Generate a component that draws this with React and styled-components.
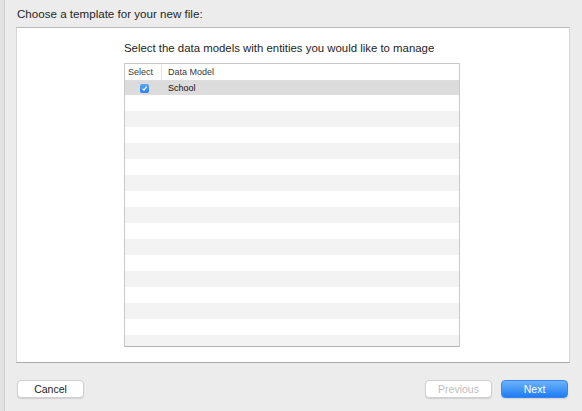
import React from 'react';
import styled, { createGlobalStyle } from 'styled-components';

const GlobalStyle = createGlobalStyle`
  html, body {
    margin: 0;
    padding: 0;
    background: #ececec;
    font-family: "Liberation Sans", Arial, sans-serif;
  }
`;

const Sheet = styled.div`
  width: 582px;
  height: 411px;
  display: flex;
  background: #ececec;
  overflow: hidden;
`;

const Edge = styled.div`
  width: 4px;
  flex: none;
  background: #e2e2e2;
  border-right: 1px solid #cfcfcf;
`;

const Body = styled.div`
  flex: 1;
  display: flex;
  flex-direction: column;
  padding: 6px 12px 0 11px;
`;

const Title = styled.div`
  font-size: 11.6px;
  color: #262626;
  height: 21px;
  padding-left: 1px;
  line-height: 15px;
`;

const Panel = styled.div`
  height: 336px;
  background: #ffffff;
  border: 1px solid #d6d6d6;
  border-top-color: #b9b9b9;
  border-bottom-color: #a9a9a9;
  display: flex;
  flex-direction: column;
  align-items: flex-start;
  padding: 14px 0 0 107px;
  box-sizing: border-box;
`;

const Prompt = styled.div`
  width: 336px;
  font-size: 11.4px;
  color: #1e1e1e;
  height: 21px;
`;

const Table = styled.div`
  width: 336px;
  height: 284px;
  box-sizing: border-box;
  border: 1px solid #c9c9c9;
  border-bottom-color: #b0b0b0;
  background: repeating-linear-gradient(
    to bottom,
    #ffffff 0px,
    #ffffff 16px,
    #f3f3f3 16px,
    #f3f3f3 32px
  );
  background-position: 0 31px;
  overflow: hidden;
`;

const Header = styled.div`
  display: flex;
  height: 16px;
  background: #ffffff;
  border-bottom: 1px solid #dedede;
  font-size: 9px;
  color: #3a3a3a;
  line-height: 16px;
`;

const HeadCell = styled.div`
  width: ${p => p.w ? p.w + 'px' : 'auto'};
  flex: ${p => p.w ? 'none' : 1};
  padding-left: ${p => p.pad}px;
  box-sizing: border-box;
  border-right: ${p => p.sep ? '1px solid #e2e2e2' : 'none'};
`;

const Row = styled.div`
  display: flex;
  align-items: center;
  height: 14px;
  background: ${p => p.selected ? '#dcdcdc' : 'transparent'};
  font-size: 9px;
  color: #111;
`;

const CheckCell = styled.div`
  width: 37px;
  display: flex;
  justify-content: center;
  padding-left: 2px;
  box-sizing: border-box;
`;

const Check = styled.div`
  width: 9px;
  height: 9px;
  border-radius: 2px;
  background: linear-gradient(#5aa8f7, #2b7ff0);
  display: flex;
  align-items: center;
  justify-content: center;
`;

const NameCell = styled.div`
  padding-left: 6px;
`;

const Footer = styled.div`
  display: flex;
  align-items: center;
  padding: 17px 2px 0 1px;
  gap: 9px;
`;

const Spacer = styled.div`
  flex: 1;
`;

const Button = styled.button`
  width: 67px;
  height: 18px;
  border-radius: 4px;
  font-family: "Liberation Sans", Arial, sans-serif;
  font-size: 10.5px;
  padding: 0;
  border: 1px solid ${p => p.primary ? '#3a86ee' : '#d0d0d0'};
  background: ${p => p.primary ? 'linear-gradient(#6cb3fa, #1f7cf3)' : '#ffffff'};
  color: ${p => p.primary ? '#ffffff' : p.disabled ? '#bdbdbd' : '#1c1c1c'};
  box-shadow: 0 1px 1px rgba(0,0,0,0.12);
`;

const rows = [{ name: 'School', checked: true }];

export default function App() {
  return (
    <>
      <GlobalStyle />
      <Sheet>
        <Edge />
        <Body>
          <Title>Choose a template for your new file:</Title>
          <Panel>
            <Prompt>Select the data models with entities you would like to manage</Prompt>
            <Table>
              <Header>
                <HeadCell w={37} pad={3} sep>Select</HeadCell>
                <HeadCell pad={6}>Data Model</HeadCell>
              </Header>
              {rows.map(r => (
                <Row key={r.name} selected>
                  <CheckCell>
                    <Check>
                      <svg width="7" height="7" viewBox="0 0 7 7">
                        <path d="M1.5 3.8 L3 5.2 L5.6 1.6" stroke="#fff" strokeWidth="1.2" fill="none" />
                      </svg>
                    </Check>
                  </CheckCell>
                  <NameCell>{r.name}</NameCell>
                </Row>
              ))}
            </Table>
          </Panel>
          <Footer>
            <Button>Cancel</Button>
            <Spacer />
            <Button disabled>Previous</Button>
            <Button primary>Next</Button>
          </Footer>
        </Body>
      </Sheet>
    </>
  );
}
